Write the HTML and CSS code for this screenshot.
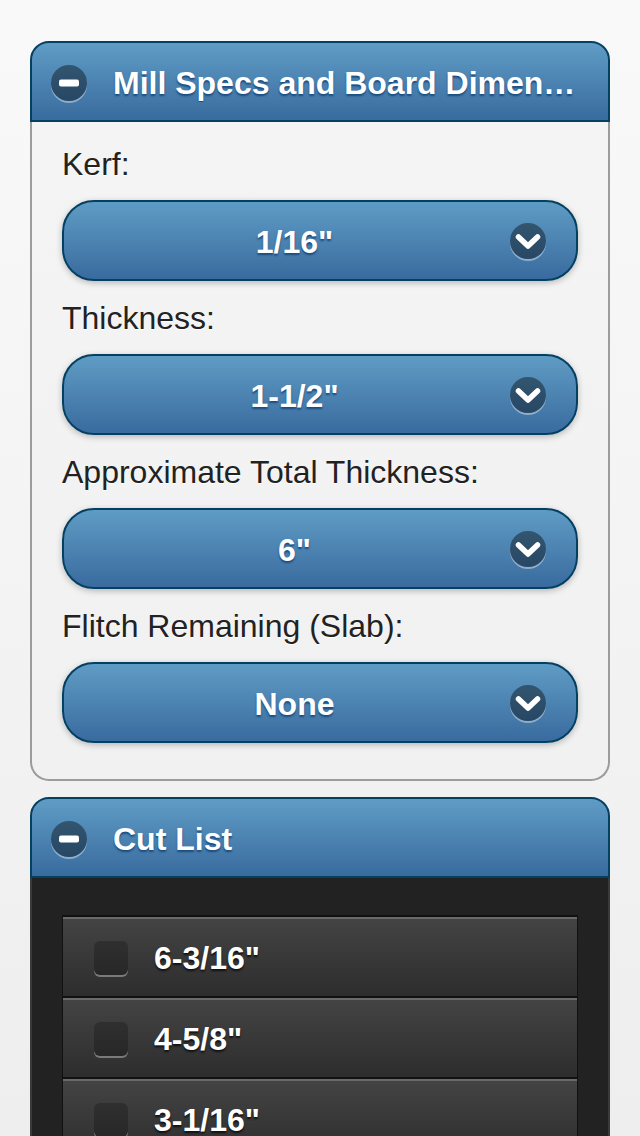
FILE: index.html
```html
<!DOCTYPE html>
<html lang="en">
    <head>
        <title>Sawmill Cut Calculator</title>
        <meta charset="utf-8" />
        <link rel="stylesheet" href="styles.css">
    </head>

    <body>
        <div class="page">
            <div class="collapsible">
                <div class="collHeader">
                    <span class="iconCircle">
                        <svg width="36" height="36" viewBox="0 0 36 36"><rect x="8" y="14.5" width="20" height="7" rx="2" fill="#fff" /></svg>
                    </span>
                    <span class="collTitle">Mill Specs and Board Dimensions</span>
                </div>
                <div class="collContent">
                    <label class="fieldLabel">Kerf:</label>
                    <div class="selectBtn">
                        <span class="selectText">1/16"</span>
                        <span class="iconCircle">
                            <svg width="36" height="36" viewBox="0 0 36 36"><polyline points="8.5,14 18,23 27.5,14" fill="none" stroke="#fff" stroke-width="5.5" stroke-linecap="round" stroke-linejoin="round" /></svg>
                        </span>
                    </div>
                    <label class="fieldLabel">Thickness:</label>
                    <div class="selectBtn">
                        <span class="selectText">1-1/2"</span>
                        <span class="iconCircle">
                            <svg width="36" height="36" viewBox="0 0 36 36"><polyline points="8.5,14 18,23 27.5,14" fill="none" stroke="#fff" stroke-width="5.5" stroke-linecap="round" stroke-linejoin="round" /></svg>
                        </span>
                    </div>
                    <label class="fieldLabel">Approximate Total Thickness:</label>
                    <div class="selectBtn">
                        <span class="selectText">6"</span>
                        <span class="iconCircle">
                            <svg width="36" height="36" viewBox="0 0 36 36"><polyline points="8.5,14 18,23 27.5,14" fill="none" stroke="#fff" stroke-width="5.5" stroke-linecap="round" stroke-linejoin="round" /></svg>
                        </span>
                    </div>
                    <label class="fieldLabel">Flitch Remaining (Slab):</label>
                    <div class="selectBtn">
                        <span class="selectText">None</span>
                        <span class="iconCircle">
                            <svg width="36" height="36" viewBox="0 0 36 36"><polyline points="8.5,14 18,23 27.5,14" fill="none" stroke="#fff" stroke-width="5.5" stroke-linecap="round" stroke-linejoin="round" /></svg>
                        </span>
                    </div>
                </div>
            </div>

            <div class="collapsible">
                <div class="collHeader">
                    <span class="iconCircle">
                        <svg width="36" height="36" viewBox="0 0 36 36"><rect x="8" y="14.5" width="20" height="7" rx="2" fill="#fff" /></svg>
                    </span>
                    <span class="collTitle">Cut List</span>
                </div>
                <div class="collContent darkContent">
                    <div class="cutList">
                        <div class="cutItem"><span class="checkBox"></span><span class="cutText">6-3/16"</span></div>
                        <div class="cutItem"><span class="checkBox"></span><span class="cutText">4-5/8"</span></div>
                        <div class="cutItem"><span class="checkBox"></span><span class="cutText">3-1/16"</span></div>
                    </div>
                </div>
            </div>
        </div>
    </body>
</html>
```

FILE: styles.css
```css
body {
    margin: 0;
    padding: 0;
    background: linear-gradient(#f9f9f9, #ededed);
    min-height: 1136px;
    font-family: "Liberation Sans", Arial, Helvetica, sans-serif;
}

.page {
    padding: 41px 30px 0 30px;
}

.collapsible {
    margin-bottom: 16px;
}

.collHeader {
    display: flex;
    align-items: center;
    height: 77px;
    padding: 0 23px 0 19px;
    border: 2px solid #044062;
    border-radius: 19px 19px 0 0;
    background: linear-gradient(#5f9cc5, #396b9e);
    color: white;
    font-size: 32px;
    font-weight: bold;
    text-shadow: 0 2px 2px #194b7e;
}

.collHeader .iconCircle {
    margin-top: 2px;
}

.collTitle {
    margin-left: 26px;
    padding-top: 3px;
    flex: 1;
    min-width: 0;
    white-space: nowrap;
    overflow: hidden;
    text-overflow: ellipsis;
}

.iconCircle {
    display: block;
    width: 36px;
    height: 36px;
    flex: none;
    border-radius: 18px;
    background-color: rgba(0, 0, 0, 0.4);
    box-shadow: 0 2px 0 rgba(255, 255, 255, 0.4);
}

.iconCircle svg {
    display: block;
}

.collContent {
    padding: 21px 30px 20px 30px;
    border: 2px solid #9c9c9c;
    border-top: none;
    border-radius: 0 0 19px 19px;
    background: linear-gradient(#f4f4f4, #f1f1f1);
}

.fieldLabel {
    display: block;
    font-size: 32px;
    line-height: 42px;
    color: #222222;
    text-shadow: 0 1px 0 #ffffff;
    margin-bottom: 15px;
}

.selectBtn {
    display: flex;
    align-items: center;
    height: 77px;
    padding: 0 30px 0 29px;
    margin-bottom: 16px;
    border: 2px solid #044062;
    border-radius: 32px;
    background: linear-gradient(#5f9cc5, #396b9e);
    box-shadow: 0 2px 6px rgba(0, 0, 0, 0.25);
    color: white;
    font-size: 32px;
    font-weight: bold;
    text-shadow: 0 2px 2px #194b7e;
}

.selectText {
    flex: 1;
    text-align: center;
    margin-right: 14px;
    padding-top: 3px;
}

.darkContent {
    background: #222222;
    border-color: #3a3a3a;
    padding: 37px 30px 0 30px;
    border-radius: 0;
    min-height: 300px;
}

.cutList {
    border-left: 1px solid #111111;
    border-right: 1px solid #111111;
}

.cutItem {
    display: flex;
    align-items: center;
    height: 79px;
    padding-left: 31px;
    border-top: 2px solid #111111;
    background: linear-gradient(#444444, #2d2d2d);
    box-shadow: inset 0 2px 0 #6a6a6a;
    color: white;
    font-size: 32px;
    font-weight: bold;
    text-shadow: 0 2px 2px #111111;
}

.checkBox {
    display: block;
    width: 34px;
    height: 34px;
    margin-top: 3px;
    border-radius: 6px;
    background-color: rgba(0, 0, 0, 0.22);
    box-shadow: 0 2px 0 rgba(255, 255, 255, 0.35);
}

.cutText {
    margin-left: 26px;
    padding-top: 3px;
}
```
